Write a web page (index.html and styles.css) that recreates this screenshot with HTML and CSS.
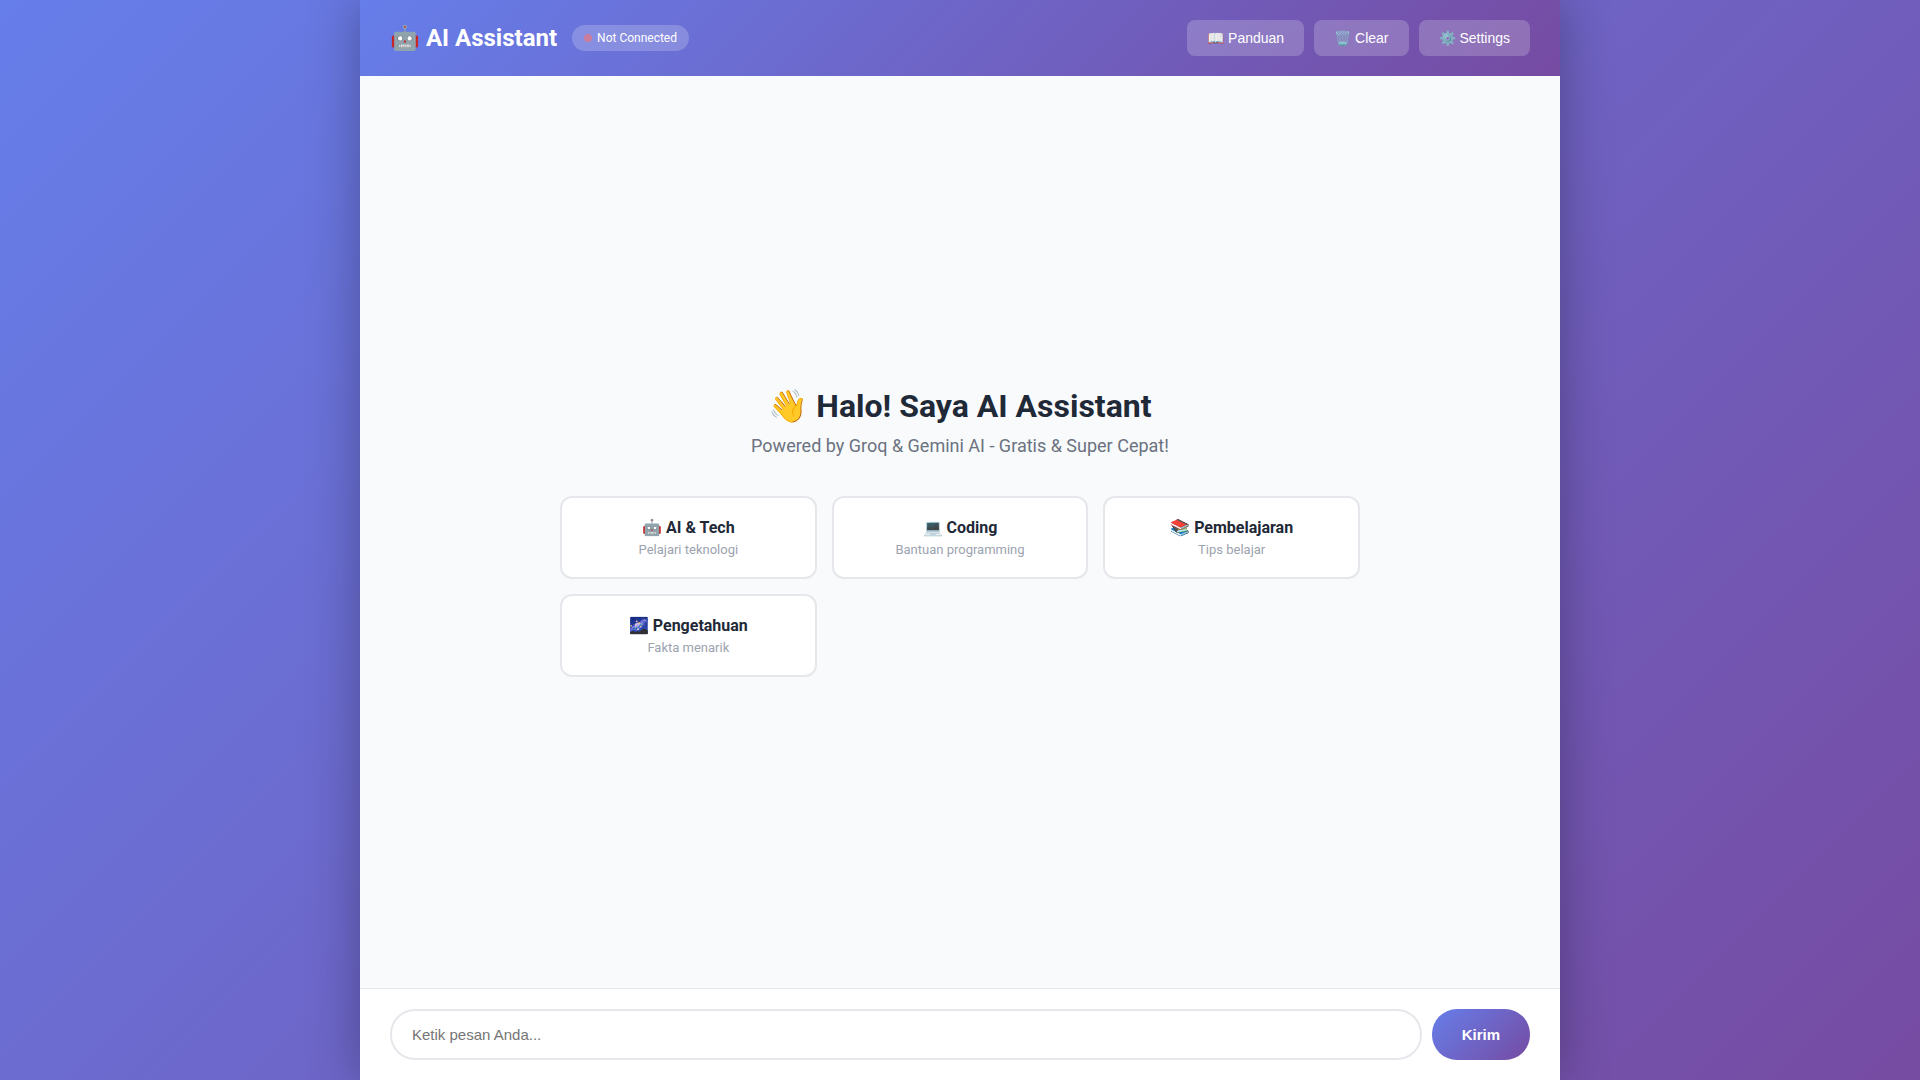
FILE: index.html
```html
<!DOCTYPE html>
<html lang="id">
<head>
  <meta charset="UTF-8">
  <meta name="viewport" content="width=device-width, initial-scale=1.0">
  <title>AI Assistant</title>
  <link rel="stylesheet" href="styles.css">
</head>
<body>
  <div class="container">
    <header class="header">
      <div class="header-left">
        <h1>🤖 AI Assistant</h1>
        <div class="status">
          <span class="status-dot"></span>
          <span>Not Connected</span>
        </div>
      </div>
      <div class="header-buttons">
        <button type="button" class="btn">📖 Panduan</button>
        <button type="button" class="btn">🗑️ Clear</button>
        <button type="button" class="btn">⚙️ Settings</button>
      </div>
    </header>

    <!-- Welcome screen -->
    <main class="chat">
      <div class="welcome">
        <h2>👋 Halo! Saya AI Assistant</h2>
        <p>Powered by Groq &amp; Gemini AI - Gratis &amp; Super Cepat!</p>
        <div class="suggestions">
          <button type="button" class="suggestion">
            <span class="suggestion-title">🤖 AI &amp; Tech</span>
            <span class="suggestion-desc">Pelajari teknologi</span>
          </button>
          <button type="button" class="suggestion">
            <span class="suggestion-title">💻 Coding</span>
            <span class="suggestion-desc">Bantuan programming</span>
          </button>
          <button type="button" class="suggestion">
            <span class="suggestion-title">📚 Pembelajaran</span>
            <span class="suggestion-desc">Tips belajar</span>
          </button>
          <button type="button" class="suggestion">
            <span class="suggestion-title">🌌 Pengetahuan</span>
            <span class="suggestion-desc">Fakta menarik</span>
          </button>
        </div>
      </div>
    </main>

    <form class="input-area">
      <input type="text" class="message-input" placeholder="Ketik pesan Anda..." aria-label="Ketik pesan Anda">
      <button type="submit" class="send-btn">Kirim</button>
    </form>
  </div>
</body>
</html>
```

FILE: styles.css
```css
* {
  margin: 0;
  padding: 0;
  box-sizing: border-box;
}
body {
  font-family: Roboto, sans-serif;
  background: linear-gradient(135deg, #667eea 0%, #764ba2 100%);
  min-height: 100vh;
}
.container {
  display: flex;
  flex-direction: column;
  max-width: 1200px;
  min-height: 100vh;
  margin: 0 auto;
  background: white;
  box-shadow: 0 0 50px rgba(0, 0, 0, 0.3);
}

/* Header */
.header {
  display: flex;
  justify-content: space-between;
  align-items: center;
  padding: 20px 30px;
  background: linear-gradient(135deg, #667eea 0%, #764ba2 100%);
  color: white;
}
.header-left {
  display: flex;
  align-items: center;
  gap: 15px;
}
.header h1 {
  font-size: 24px;
  line-height: 28px;
}
.status {
  display: flex;
  align-items: center;
  gap: 5px;
  padding: 6px 12px;
  border-radius: 20px;
  background: rgba(255, 255, 255, 0.2);
  font-size: 12px;
  line-height: 14px;
}
.status-dot {
  width: 8px;
  height: 8px;
  border-radius: 50%;
  background: #f87171;
  opacity: 0.6;
}
.header-buttons {
  display: flex;
  gap: 10px;
}
.btn {
  padding: 10px 20px;
  border: none;
  border-radius: 8px;
  background: rgba(255, 255, 255, 0.2);
  color: white;
  font-family: "Liberation Sans", Arial, sans-serif;
  font-size: 14px;
  line-height: 16px;
  cursor: pointer;
}

/* Chat */
.chat {
  flex: 1;
  display: flex;
  flex-direction: column;
  justify-content: center;
  align-items: center;
  padding: 30px;
  background: #f8fafc;
}
.welcome {
  width: 100%;
  max-width: 800px;
  text-align: center;
}
.welcome h2 {
  margin-bottom: 10px;
  color: #1f2937;
  font-size: 32px;
  line-height: 38px;
}
.welcome p {
  margin-bottom: 40px;
  color: #6b7280;
  font-size: 18px;
  line-height: 21px;
}
.suggestions {
  display: grid;
  grid-template-columns: repeat(auto-fit, minmax(200px, 1fr));
  gap: 15px;
}
.suggestion {
  padding: 20px;
  border: 2px solid #e5e7eb;
  border-radius: 12px;
  background: white;
  font-family: inherit;
  cursor: pointer;
}
.suggestion-title {
  display: block;
  margin-bottom: 5px;
  color: #1f2937;
  font-size: 16px;
  font-weight: bold;
  line-height: 19px;
}
.suggestion-desc {
  display: block;
  color: #9ca3af;
  font-size: 13px;
  line-height: 15px;
}

/* Input */
.input-area {
  display: flex;
  gap: 10px;
  padding: 20px 30px;
  border-top: 1px solid #e5e7eb;
  background: white;
}
.message-input {
  flex: 1;
  min-width: 0;
  padding: 15px 20px;
  border: 2px solid #e5e7eb;
  border-radius: 25px;
  font-family: "Liberation Sans", Arial, sans-serif;
  font-size: 15px;
  outline: none;
}
.send-btn {
  padding: 15px 30px;
  border: none;
  border-radius: 25px;
  background: linear-gradient(135deg, #667eea 0%, #764ba2 100%);
  color: white;
  font-family: "Liberation Sans", Arial, sans-serif;
  font-size: 15px;
  font-weight: bold;
  cursor: pointer;
}
```
